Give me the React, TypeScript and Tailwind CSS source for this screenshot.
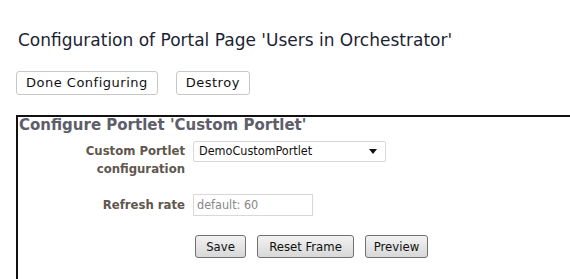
export default function App() {
  const verdana = { fontFamily: '"DejaVu Sans", Verdana, sans-serif' };
  const tahoma = { fontFamily: '"DejaVu Sans Condensed", Tahoma, sans-serif' };
  return (
    <div className="w-[570px] h-[279px] overflow-hidden bg-white" style={verdana}>
      <div className="pt-[28px] pl-[18px]">
        <h1 className="text-[17px] leading-[25px] text-[#1c1f33] font-normal">
          Configuration of Portal Page 'Users in Orchestrator'
        </h1>
      </div>
      <div className="flex gap-[18px] pl-[16px] mt-[18px]">
        <button className="h-[24px] px-[9px] border border-[#c8c8c8] rounded-[3px] bg-white text-[13px] tracking-[0.5px] text-[#111]">
          Done Configuring
        </button>
        <button className="h-[24px] px-[9px] border border-[#c8c8c8] rounded-[3px] bg-white text-[13px] tracking-[0.5px] text-[#111]">
          Destroy
        </button>
      </div>
      <div className="ml-[16px] mt-[20px] w-[600px] h-[200px] border-2 border-[#111] pl-[1px]">
        <h2 className="text-[15px] leading-[17px] font-bold text-[#5e5e6a]">
          Configure Portlet 'Custom Portlet'
        </h2>
        <div className="grid grid-cols-[166px_1fr] gap-x-[8px] mt-[7px] text-[13px]" style={tahoma}>
          <div className="text-right font-bold text-[#5f574e] leading-[18px] mt-[1px]">
            Custom Portlet
            <br />
            configuration
          </div>
          <div>
            <div className="w-[193px] h-[21px] border border-[#d8d8d8] rounded-[2px] flex items-center justify-between pl-[5px] pr-[8px] text-[12.5px] text-[#111]">
              <span>DemoCustomPortlet</span>
              <svg width="8" height="5" viewBox="0 0 8 5">
                <path d="M0 0h8L4 5z" fill="#111" />
              </svg>
            </div>
          </div>
          <div className="text-right font-bold text-[#5f574e] leading-[18px] mt-[18px]">Refresh rate</div>
          <div className="mt-[16px]">
            <div className="w-[120px] h-[22px] border border-[#d8d8d8] flex items-center pl-[3px] text-[12.5px] text-[#888]">
              default: 60
            </div>
          </div>
        </div>
        <div className="flex gap-[11px] ml-[176px] mt-[19px]" style={tahoma}>
          <button className="h-[23px] w-[51px] border border-[#707070] rounded-[3px] bg-gradient-to-b from-[#f2f2f2] to-[#d8d8d8] text-[13px] text-[#111]">Save</button>
          <button className="h-[23px] w-[97px] border border-[#707070] rounded-[3px] bg-gradient-to-b from-[#f2f2f2] to-[#d8d8d8] text-[13px] text-[#111]">Reset Frame</button>
          <button className="h-[23px] w-[63px] border border-[#707070] rounded-[3px] bg-gradient-to-b from-[#f2f2f2] to-[#d8d8d8] text-[13px] text-[#111]">Preview</button>
        </div>
      </div>
    </div>
  );
}
